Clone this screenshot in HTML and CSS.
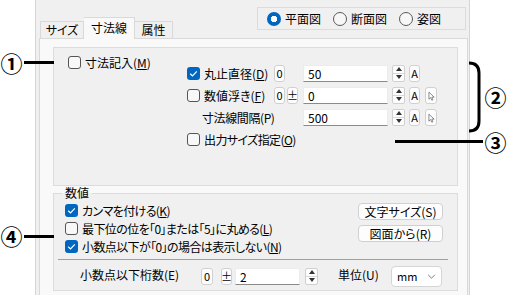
FILE: index.html
```html
<!DOCTYPE html>
<html lang="ja">
<head>
    <meta charset="UTF-8">
    <link rel="stylesheet" href="styles.css">
    <title>寸法線</title>
</head>
<body>
<div class="page">
    <div class="dialog">
        <div class="dialog-head">
            <div class="tabs">
                <div class="tab">サイズ</div>
                <div class="tab active">寸法線</div>
                <div class="tab">属性</div>
            </div>
            <div class="view-group">
                <label class="radio"><span class="dot on"></span><span>平面図</span></label>
                <label class="radio"><span class="dot"></span><span>断面図</span></label>
                <label class="radio"><span class="dot"></span><span>姿図</span></label>
            </div>
        </div>

        <div class="tab-panel">
            <div class="group dims">
                <div class="dims-left">
                    <label class="check"><span class="box"></span><span>寸法記入(<u>M</u>)</span></label>
                </div>
                <div class="dims-right">
                    <div class="field-row">
                        <label class="check field-label"><span class="box on"><svg viewBox="0 0 13 13"><polyline points="3.2,6.8 5.5,9 9.8,4.3"/></svg></span><span>丸止直径(<u>D</u>)</span></label>
                        <div class="mods"><span class="mini">0</span></div>
                        <div class="text-input">50</div>
                        <span class="spin"><i class="up"></i><i class="down"></i></span>
                        <span class="mini a-btn">A</span>
                    </div>
                    <div class="field-row">
                        <label class="check field-label"><span class="box"></span><span>数値浮き(<u>F</u>)</span></label>
                        <div class="mods"><span class="mini">0</span><span class="mini">±</span></div>
                        <div class="text-input">0</div>
                        <span class="spin"><i class="up"></i><i class="down"></i></span>
                        <span class="mini a-btn">A</span>
                        <span class="mini pick"><svg viewBox="0 0 12 17"><path d="M3.5 4.5 V13 L5.6 11 L7 14.2 L8.3 13.6 L7 10.5 H9.8 Z"/></svg></span>
                    </div>
                    <div class="field-row">
                        <span class="field-label plain">寸法線間隔(P)</span>
                        <div class="mods"></div>
                        <div class="text-input">500</div>
                        <span class="spin"><i class="up"></i><i class="down"></i></span>
                        <span class="mini a-btn">A</span>
                        <span class="mini pick"><svg viewBox="0 0 12 17"><path d="M3.5 4.5 V13 L5.6 11 L7 14.2 L8.3 13.6 L7 10.5 H9.8 Z"/></svg></span>
                    </div>
                    <div class="field-row">
                        <label class="check tight"><span class="box"></span><span>出力サイズ指定(<u>O</u>)</span></label>
                    </div>
                </div>
            </div>

            <fieldset class="group numbers">
                <legend>数値</legend>
                <div class="numbers-top">
                    <div class="checks">
                        <label class="check tight"><span class="box on"><svg viewBox="0 0 13 13"><polyline points="3.2,6.8 5.5,9 9.8,4.3"/></svg></span><span>カンマを付ける(<u>K</u>)</span></label>
                        <label class="check tight"><span class="box"></span><span>最下位の位を「0」または「5」に丸める(<u>L</u>)</span></label>
                        <label class="check tight"><span class="box on"><svg viewBox="0 0 13 13"><polyline points="3.2,6.8 5.5,9 9.8,4.3"/></svg></span><span>小数点以下が「0」の場合は表示しない(<u>N</u>)</span></label>
                    </div>
                    <div class="side-buttons">
                        <button class="btn">文字サイズ(S)</button>
                        <button class="btn">図面から(R)</button>
                    </div>
                </div>
                <div class="separator"></div>
                <div class="digits-row">
                    <span class="digits-label">小数点以下桁数(E)</span>
                    <span class="mini zero">0</span>
                    <span class="mini">±</span>
                    <div class="text-input short">2</div>
                    <span class="spin"><i class="up"></i><i class="down"></i></span>
                    <span class="unit-label">単位(U)</span>
                    <div class="select"><span>mm</span><svg viewBox="0 0 10 6"><polyline points="1,1 5,5 9,1"/></svg></div>
                </div>
            </fieldset>
        </div>
    </div>

    <!-- callouts drawn over the dialog -->
    <span class="mark m1">①</span>
    <span class="lead l1"></span>
    <span class="mark m2">②</span>
    <svg class="bracket" viewBox="0 0 16 73"><path d="M2 2 Q12 2 12 12 V60 Q12 70 2 70"/></svg>
    <span class="mark m3">③</span>
    <span class="lead l3"></span>
    <span class="mark m4">④</span>
    <span class="lead l4"></span>
</div>
</body>
</html>
```

FILE: styles.css
```css
* {
    box-sizing: border-box;
}

body {
    margin: 0;
    background: #fff;
    font-family: "Noto Sans CJK JP", sans-serif;
    font-size: 12px;
    color: #000;
    font-feature-settings: "palt";
}

.page {
    position: relative;
    width: 509px;
    height: 295px;
    overflow: hidden;
}

.dialog {
    margin-left: 35px;
    width: 435px;
    height: 295px;
    background: #f0f0f0;
    border-left: 1px solid #d5d5d5;
    border-right: 1px solid #d5d5d5;
    padding: 0 1px 0 3px;
}

.dialog-head {
    height: 38px;
    display: flex;
    justify-content: space-between;
    align-items: flex-start;
}

/* tabs */
.tabs {
    display: flex;
    align-items: flex-end;
    align-self: flex-end;
    margin-left: 1px;
}

.tab {
    height: 17px;
    line-height: 16px;
    border: 1px solid #d9d9d9;
    border-bottom: none;
    background: #f0f0f0;
    white-space: nowrap;
    text-align: center;
}

.tab:first-child {
    width: 44px;
}

.tab:last-child {
    width: 38px;
    border-left: none;
}

.tab.active {
    width: 51px;
    height: 22px;
    margin-bottom: -1px;
    line-height: 20px;
    background: #f9f9f9;
    border-left: none;
    border-right: 1px solid #d9d9d9;
    position: relative;
    z-index: 1;
}

/* view radio group */
.view-group {
    margin-top: 7px;
    margin-right: 2px;
    width: 209px;
    height: 23px;
    border: 1px solid #dcdcdc;
    display: flex;
    align-items: center;
    padding-left: 9px;
    gap: 12px;
}

.radio {
    display: flex;
    align-items: center;
    gap: 4px;
}

.dot {
    width: 14px;
    height: 14px;
    border-radius: 50%;
    border: 1px solid #5a5a5a;
    background: #f7f7f7;
}

.dot.on {
    border: none;
    background: radial-gradient(circle, #fff 0 3px, #0067c0 3.5px);
}

/* tab page */
.tab-panel {
    height: 262px;
    border: 1px solid #d9d9d9;
    background: #f9f9f9;
    padding: 8px 9px 0 13px;
}

.group {
    border: 1px solid #dcdcdc;
    background: #f0f0f0;
}

.dims {
    height: 139px;
    display: flex;
}

.dims-left {
    width: 133px;
    padding: 5px 0 0 14px;
}

.dims-right {
    padding-top: 14px;
}

.check {
    display: flex;
    align-items: center;
    gap: 4px;
    height: 18px;
    white-space: nowrap;
}

.check.tight span:last-child {
    letter-spacing: -0.6px;
}

.box {
    width: 13px;
    height: 13px;
    flex: none;
    border: 1px solid #555;
    border-radius: 3px;
    background: #f8f8f8;
}

.box.on {
    border: none;
    background: #0067c0;
}

.box svg {
    display: block;
    width: 13px;
    height: 13px;
    fill: none;
    stroke: #fff;
    stroke-width: 1.2;
}

.field-row {
    display: flex;
    align-items: center;
    height: 22px;
}

.field-label {
    width: 87px;
}

.field-label.plain {
    padding-left: 15px;
    white-space: nowrap;
    letter-spacing: -0.4px;
}

.mods {
    width: 29px;
    display: flex;
    gap: 2px;
}

.mini {
    width: 11px;
    height: 17px;
    flex: none;
    border: 1px solid #d0d0d0;
    border-radius: 3px;
    background: #fdfdfd;
    display: flex;
    align-items: center;
    justify-content: center;
    font-size: 11px;
    line-height: 1;
}

.a-btn {
    margin-left: 4px;
}

.pick {
    margin-left: 5px;
    width: 12px;
}

.pick svg {
    width: 12px;
    height: 17px;
    fill: #fff;
    stroke: #555;
    stroke-width: 0.8;
}

.text-input {
    width: 85px;
    height: 17px;
    background: #fff;
    border: 1px solid #ececec;
    border-bottom: 1px solid #8a8a8a;
    padding-left: 4px;
    line-height: 15px;
    font-size: 12px;
}

.spin {
    margin-left: 4px;
    width: 13px;
    height: 17px;
    border: 1px solid #d0d0d0;
    border-radius: 2px;
    background: #fdfdfd;
    display: flex;
    flex-direction: column;
}

.spin i {
    flex: 1;
    display: flex;
    align-items: center;
    justify-content: center;
}

.spin i.up {
    border-bottom: 1px solid #d8d8d8;
}

.spin i::after {
    content: "";
    border-left: 3px solid transparent;
    border-right: 3px solid transparent;
}

.spin i.up::after {
    border-bottom: 4px solid #333;
}

.spin i.down::after {
    border-top: 4px solid #333;
}

/* numbers group */
.numbers {
    margin: 0;
    padding: 0 0 3px;
    min-width: 0;
    height: 105px;
}

.numbers legend {
    margin-left: 8px;
    padding: 0 3px;
    line-height: 14px;
}

.numbers-top {
    display: flex;
    justify-content: space-between;
    padding: 1px 14px 0 11px;
}

.side-buttons {
    display: flex;
    flex-direction: column;
    gap: 5px;
    padding-top: 2px;
}

.btn {
    width: 85px;
    height: 17px;
    padding: 0;
    border: 1px solid #d0d0d0;
    border-radius: 4px;
    background: #fdfdfd;
    font-family: inherit;
    font-size: 12px;
    line-height: 15px;
    color: #000;
    font-feature-settings: "palt";
}

.separator {
    margin: 4px 9px 0 4px;
    height: 1px;
    background: #a0a0a0;
}

.digits-row {
    display: flex;
    align-items: center;
    height: 22px;
    margin-top: 5px;
    padding-left: 26px;
}

.digits-label {
    width: 121px;
    margin-top: -3px;
}

.mini.zero {
    width: 12px;
    margin-right: 8px;
}

.text-input.short {
    width: 65px;
    margin-left: 3px;
}

.digits-row .spin {
    margin-left: 5px;
}

.unit-label {
    width: 53px;
    margin-left: 20px;
    margin-top: -3px;
}

.select {
    width: 51px;
    height: 21px;
    border: 1px solid #d5d5d5;
    border-radius: 4px;
    background: #fff;
    display: flex;
    align-items: center;
    justify-content: space-between;
    padding: 0 5px 0 5px;
    font-size: 11px;
}

.select svg {
    width: 9px;
    height: 5px;
    fill: none;
    stroke: #666;
    stroke-width: 1;
}

/* callouts */
.mark {
    position: absolute;
    width: 23px;
    text-align: center;
    font-size: 22px;
    font-weight: 700;
    line-height: 22px;
}

.m1 { left: 0; top: 51px; }
.m2 { left: 484px; top: 85px; }
.m3 { left: 484px; top: 130px; }
.m4 { left: 0; top: 224px; }

.lead {
    position: absolute;
    height: 3px;
    background: #000;
}

.l1 { left: 24px; top: 61px; width: 30px; }
.l3 { left: 395px; top: 140px; width: 88px; }
.l4 { left: 24px; top: 235px; width: 30px; }

.bracket {
    position: absolute;
    left: 467px;
    top: 61px;
    width: 16px;
    height: 73px;
    fill: none;
    stroke: #000;
    stroke-width: 3;
}
```
